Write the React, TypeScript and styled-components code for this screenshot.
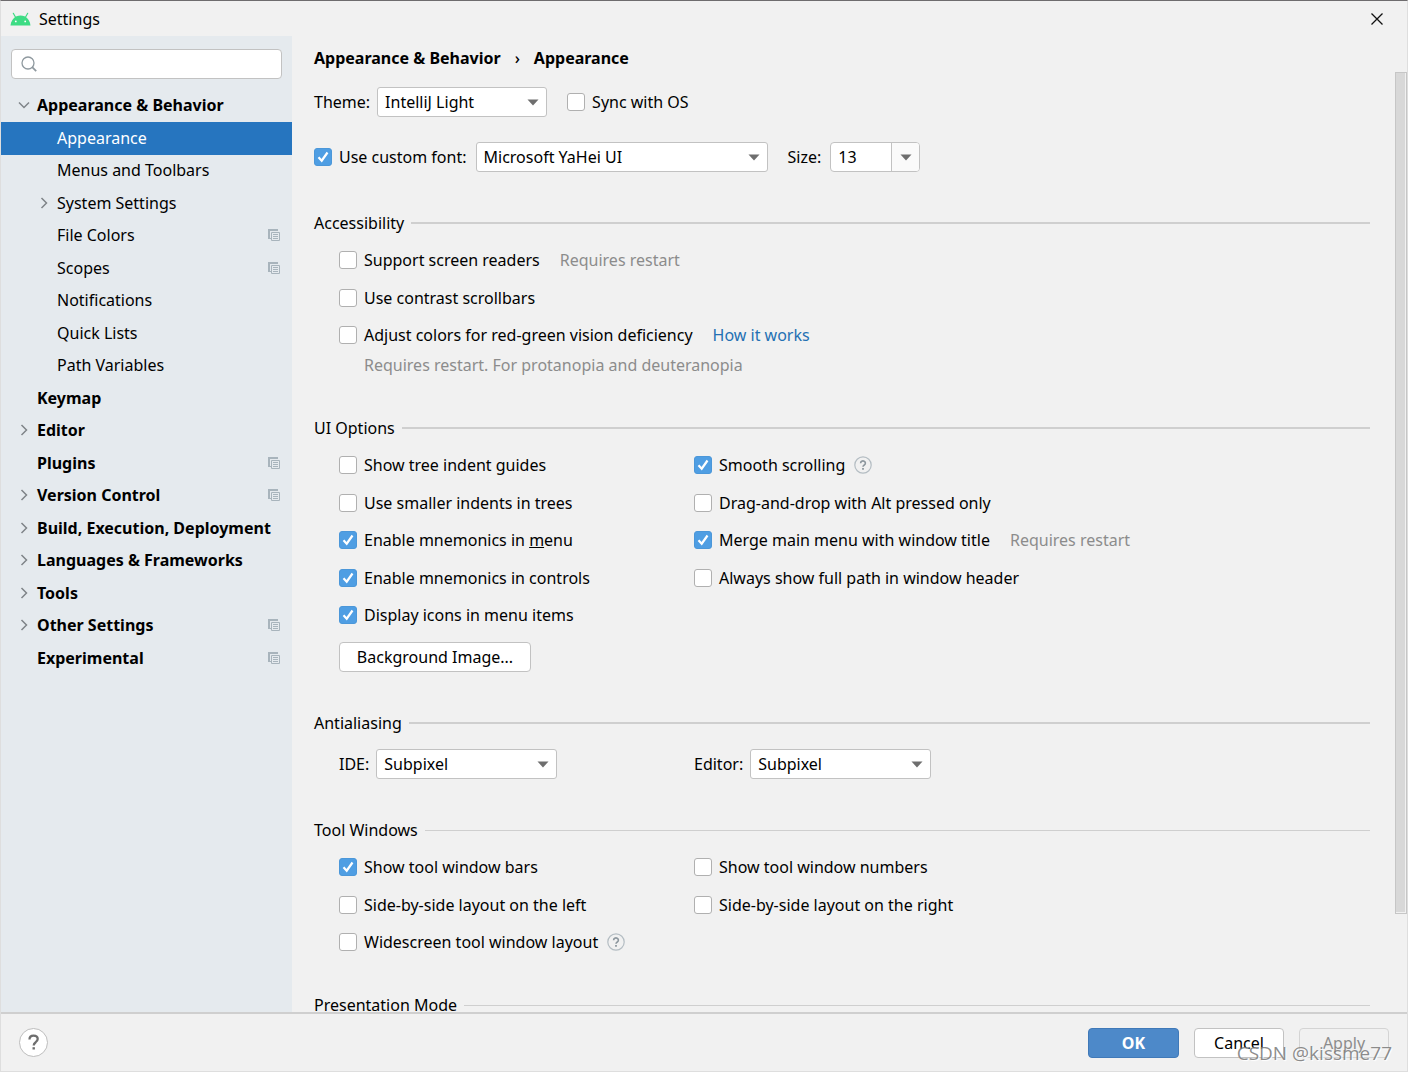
import React, { useId, useState } from "react";
import styled, { createGlobalStyle, css } from "styled-components";

const color = {
  window: "#f1f1f1",
  sidebar: "#e5eaee",
  selection: "#2675bf",
  line: "#cfcfcf",
  control: "#c2c2c2",
  muted: "#8c8c8c",
  link: "#2470b3",
  accent: "#4f9ee3",
};

const GlobalStyle = createGlobalStyle`
  *, *::before, *::after { box-sizing: border-box; }
  body {
    margin: 0;
    background: ${color.window};
    color: #000;
    font-family: "Noto Sans", "Open Sans", sans-serif;
    font-size: 16px;
    line-height: 24px;
  }
  button, input, select { font: inherit; color: inherit; }
`;

/* Window frame */

const Window = styled.div`
  display: flex;
  flex-direction: column;
  height: 100vh;
  overflow: hidden;
  border: 1px solid #dedede;
  border-top-color: #6e6c6e;
`;

const TitleBar = styled.header`
  display: flex;
  align-items: center;
  flex: none;
  gap: 8px;
  height: 35px;
  padding: 0 23px 0 9px;
`;

const WindowTitle = styled.h1`
  flex: 1;
  margin: 0;
  font-size: 16px;
  font-weight: 400;
`;

const CloseButton = styled.button`
  display: flex;
  padding: 0;
  border: 0;
  background: none;
`;

const Body = styled.div`
  display: flex;
  flex: 1;
  min-height: 0;
`;

/* Sidebar */

const Sidebar = styled.aside`
  flex: none;
  width: 291px;
  padding-top: 13px;
  background: ${color.sidebar};
`;

const SearchBox = styled.label`
  display: flex;
  align-items: center;
  height: 30px;
  margin: 0 10px 11px;
  padding: 0 9px;
  gap: 8px;
  border: 1px solid ${color.control};
  border-radius: 4px;
  background: #fff;
`;

const SearchInput = styled.input`
  flex: 1;
  min-width: 0;
  border: 0;
  outline: 0;
  background: none;
`;

const Tree = styled.ul`
  display: grid;
  grid-auto-rows: 32px 33px;
  margin: 0;
  padding: 0;
  list-style: none;
`;

const TreeItem = styled.li`
  display: grid;
`;

const TreeButton = styled.button<{ $level: number; $selected: boolean }>`
  display: flex;
  align-items: center;
  gap: 7px;
  padding: 0 12px 2px ${(p) => 17 + p.$level * 20}px;
  border: 0;
  background: none;
  text-align: left;
  font-weight: ${(p) => (p.$level === 0 ? 700 : 400)};
  white-space: nowrap;
  ${(p) =>
    p.$selected &&
    css`
      background: ${color.selection};
      color: #fff;
    `}
`;

const ChevronSlot = styled.span`
  display: flex;
  flex: none;
  width: 12px;
`;

const TreeLabel = styled.span`
  flex: 1;
`;

/* Main pane */

const Main = styled.main`
  display: flex;
  flex: 1;
  flex-direction: column;
  min-width: 0;
`;

const Breadcrumb = styled.nav`
  display: flex;
  flex: none;
  align-items: center;
  gap: 14px;
  height: 36px;
  padding: 8px 22px 0;
  font-weight: 700;
`;

const Separator = styled.span`
  font-weight: 500;
`;

const Viewport = styled.div`
  display: flex;
  flex: 1;
  min-height: 0;
`;

const Page = styled.div`
  display: flex;
  flex: 1;
  flex-direction: column;
  min-width: 0;
  padding: 15px 25px 0 22px;
  overflow: hidden;
`;

const ScrollTrack = styled.div`
  flex: none;
  width: 12px;
`;

const ScrollThumb = styled.div`
  height: 89.6%;
  border: 1px solid #c6c6c6;
  background: #d8d8d8;
  box-shadow: inset -1px -1px 0 ${color.window};
`;

const Row = styled.div<{ $after?: number }>`
  display: flex;
  align-items: center;
  flex: none;
  gap: 20px;
  margin-bottom: ${(p) => p.$after ?? 0}px;
`;

const Field = styled.div<{ $gap?: number }>`
  display: flex;
  align-items: center;
  gap: ${(p) => p.$gap ?? 7}px;
`;

const Section = styled.section`
  flex: none;
  margin-bottom: 32px;
`;

const SectionHeader = styled.div<{ $rule: number }>`
  display: flex;
  align-items: center;
  gap: 7px;
  height: 24px;
  margin-bottom: 6px;
  &::after {
    content: "";
    flex: 1;
    height: ${(p) => p.$rule}px;
    background: ${color.line};
  }
`;

const SectionTitle = styled.h2`
  margin: 0;
  font-size: 16px;
  font-weight: 400;
`;

const Options = styled.div`
  display: grid;
  grid-template-columns: 355px 1fr;
  grid-auto-rows: 38px 37px;
  align-items: center;
  padding-left: 25px;
`;

const Option = styled.div<{ $column?: number; $wide?: boolean }>`
  display: flex;
  align-items: center;
  grid-column: ${(p) => (p.$wide ? "1 / -1" : p.$column ?? "auto")};
  white-space: nowrap;
`;

const Note = styled.p`
  margin: 0 0 8px 50px;
  line-height: 22px;
  color: ${color.muted};
`;

const Hint = styled.span`
  margin-left: 20px;
  color: ${color.muted};
`;

const Link = styled.a`
  margin-left: 20px;
  color: ${color.link};
  text-decoration: none;
`;

const HelpSlot = styled.span`
  display: flex;
  margin-left: 9px;
`;

const ControlRow = styled.div`
  display: grid;
  grid-template-columns: 355px 1fr;
  align-items: center;
  padding: 8px 0 7px 25px;
`;

/* Controls */

const CheckLabel = styled.label`
  display: flex;
  align-items: center;
  gap: 7px;
`;

const CheckFrame = styled.span`
  display: grid;
  place-items: center;
  > * { grid-area: 1 / 1; }
`;

const CheckInput = styled.input`
  width: 18px;
  height: 18px;
  margin: 0;
  appearance: none;
  border: 1px solid #b0b0b0;
  border-radius: 3px;
  background: #fff;
  & + svg { visibility: hidden; pointer-events: none; }
  &:checked { border-color: #4b97d9; background: ${color.accent}; }
  &:checked + svg { visibility: visible; }
`;

const SelectFrame = styled.span<{ $width: number }>`
  display: grid;
  align-items: center;
  width: ${(p) => p.$width}px;
  > * { grid-area: 1 / 1; }
  > svg { justify-self: end; margin-right: 8px; pointer-events: none; }
`;

const SelectInput = styled.select`
  width: 100%;
  height: 30px;
  padding: 0 24px 0 7px;
  appearance: none;
  border: 1px solid ${color.control};
  border-radius: 3px;
  background: #fff;
`;

const ComboFrame = styled.span`
  display: flex;
  width: 90px;
  height: 30px;
  overflow: hidden;
  border: 1px solid ${color.control};
  border-radius: 4px;
  background: #fff;
`;

const ComboInput = styled.input`
  flex: 1;
  min-width: 0;
  padding: 0 7px;
  border: 0;
  outline: 0;
  background: none;
`;

const ComboButton = styled.button`
  display: flex;
  align-items: center;
  justify-content: center;
  width: 28px;
  padding: 0;
  border: 0;
  border-left: 1px solid ${color.control};
  background: #fafafa;
`;

const Button = styled.button<{ $primary?: boolean; $width: number }>`
  width: ${(p) => p.$width}px;
  height: 30px;
  padding: 0;
  border: 1px solid ${color.control};
  border-radius: 4px;
  background: #fff;
  ${(p) =>
    p.$primary &&
    css`
      border-color: #4079b8;
      background: #4d89c9;
      color: #fff;
      font-weight: 700;
    `}
  &:disabled {
    border-color: #d4d4d4;
    background: ${color.window};
    color: ${color.muted};
  }
`;

const Footer = styled.footer`
  display: flex;
  align-items: center;
  flex: none;
  gap: 15px;
  height: 59px;
  padding: 0 18px;
  border-top: 2px solid ${color.line};
`;

const HelpButton = styled.button`
  display: flex;
  align-items: center;
  justify-content: center;
  width: 29px;
  height: 29px;
  margin-right: auto;
  padding: 0;
  border: 1px solid #bdbdbd;
  border-radius: 50%;
  background: #fff;
`;

const Watermark = styled.span`
  position: absolute;
  right: 16px;
  bottom: 5px;
  font-family: "Open Sans", "Noto Sans", sans-serif;
  font-size: 19px;
  line-height: 28px;
  color: rgba(120, 120, 120, 0.85);
  text-shadow: 1px 1px 1px #fff;
  pointer-events: none;
`;

/* Icons */

const AndroidIcon = () => (
  <svg width="21" height="14" viewBox="0 0 21 14" aria-hidden="true">
    <path d="M0.5 13.5C.8 9.2 3.2 6 6.5 4.3a10 10 0 0 1 8 0c3.300 1.700 5.700 4.900 6 9.200z" fill="#3ddc84" />
    <path d="M5.700 5.500 3.300 1.300M15.300 5.500l2.400-4.200" stroke="#3ddc84" strokeWidth="1.200" strokeLinecap="round" />
    <circle cx="5.800" cy="9.400" r="0.900" fill="#fff" />
    <circle cx="15.200" cy="9.400" r="0.900" fill="#fff" />
  </svg>
);

const CloseIcon = () => (
  <svg width="14" height="14" viewBox="0 0 14 14" aria-hidden="true">
    <path d="M1.500 1.500l11 11M12.500 1.500l-11 11" stroke="#111" strokeWidth="1.300" />
  </svg>
);

const SearchIcon = () => (
  <svg width="16" height="16" viewBox="0 0 16 16" fill="none" stroke="#8f999f" aria-hidden="true">
    <circle cx="7" cy="7" r="6" strokeWidth="1.300" />
    <path d="M11.200 11.200l4 4" strokeWidth="1.800" />
  </svg>
);

const Chevron = ({ open }: { open?: boolean }) => (
  <svg width="12" height="12" viewBox="0 0 12 12" fill="none" stroke="#7f8488" strokeWidth="1.500" aria-hidden="true">
    <path d={open ? "M1 3.500l5 5 5-5" : "M3.500 1l5 5-5 5"} />
  </svg>
);

const ProjectIcon = () => (
  <svg width="12" height="12" viewBox="0 0 12 12" fill="none" aria-hidden="true">
    <path d="M0 0h10v2H2v7h1v1H0z" fill="#a8b4bc" />
    <path d="M3.500 3.500h8v8h-8z" stroke="#a8b4bc" />
    <path d="M5 5.500h5M5 7.500h5M5 9.500h5" stroke="#a8b4bc" />
  </svg>
);

const ArrowIcon = () => (
  <svg width="12" height="7" viewBox="0 0 12 7" aria-hidden="true">
    <path d="M0.500 0.500h11L6 6.500z" fill="#6e6e6e" />
  </svg>
);

const CheckIcon = () => (
  <svg width="18" height="18" viewBox="0 0 18 18" fill="none" aria-hidden="true">
    <path d="M4.500 9.300l3.200 3.400 5.800-8.200" stroke="#fff" strokeWidth="2.200" />
  </svg>
);

const HintIcon = () => (
  <svg width="18" height="18" viewBox="0 0 18 18" fill="none" aria-hidden="true">
    <circle cx="9" cy="9" r="8.200" stroke="#b4bdc3" strokeWidth="1.200" />
    <path d="M6.600 7.200a2.400 2.200 0 1 1 3.700 1.800c-.9.600-1.300.9-1.300 1.800" stroke="#8d979e" strokeWidth="1.600" />
    <path d="M8.100 12h1.800v1.700H8.100z" fill="#8d979e" />
  </svg>
);

const QuestionIcon = () => (
  <svg width="13" height="17" viewBox="0 0 13 17" fill="none" aria-hidden="true">
    <path d="M2.500 5.500c0-2.400 1.700-3.800 4-3.800s4.200 1.300 4.200 3.400c0 1.500-.8 2.200-2 3.100C7.300 9.200 6.700 9.800 6.700 11.500" stroke="#6e6e6e" strokeWidth="2.300" />
    <path d="M5.500 13.200h2.400v2.300H5.500z" fill="#6e6e6e" />
  </svg>
);

/* Composite parts */

type CheckProps = { children: React.ReactNode; on?: boolean };

const Check = ({ children, on }: CheckProps) => (
  <CheckLabel>
    <CheckFrame>
      <CheckInput type="checkbox" defaultChecked={on} />
      <CheckIcon />
    </CheckFrame>
    <span>{children}</span>
  </CheckLabel>
);

type SelectProps = { width: number; value: string; id?: string; label?: string };

const Select = ({ width, value, id, label }: SelectProps) => (
  <SelectFrame $width={width}>
    <SelectInput id={id} aria-label={label} defaultValue={value}>
      <option>{value}</option>
    </SelectInput>
    <ArrowIcon />
  </SelectFrame>
);

const LabeledSelect = ({ label, width, value }: { label: string; width: number; value: string }) => {
  const id = useId();
  return (
    <Field>
      <label htmlFor={id}>{label}</label>
      <Select id={id} width={width} value={value} />
    </Field>
  );
};

const Group = ({ title, rule = 2, children }: { title: string; rule?: number; children?: React.ReactNode }) => (
  <Section>
    <SectionHeader $rule={rule}>
      <SectionTitle>{title}</SectionTitle>
    </SectionHeader>
    {children}
  </Section>
);

type Node = { label: string; level: number; chevron?: "open" | "closed"; project?: boolean };

const nodes: Node[] = [
  { label: "Appearance & Behavior", level: 0, chevron: "open" },
  { label: "Appearance", level: 1 },
  { label: "Menus and Toolbars", level: 1 },
  { label: "System Settings", level: 1, chevron: "closed" },
  { label: "File Colors", level: 1, project: true },
  { label: "Scopes", level: 1, project: true },
  { label: "Notifications", level: 1 },
  { label: "Quick Lists", level: 1 },
  { label: "Path Variables", level: 1 },
  { label: "Keymap", level: 0 },
  { label: "Editor", level: 0, chevron: "closed" },
  { label: "Plugins", level: 0, project: true },
  { label: "Version Control", level: 0, chevron: "closed", project: true },
  { label: "Build, Execution, Deployment", level: 0, chevron: "closed" },
  { label: "Languages & Frameworks", level: 0, chevron: "closed" },
  { label: "Tools", level: 0, chevron: "closed" },
  { label: "Other Settings", level: 0, chevron: "closed", project: true },
  { label: "Experimental", level: 0, project: true },
];

export default function App() {
  const [selected, setSelected] = useState("Appearance");
  const sizeId = useId();

  return (
    <>
      <GlobalStyle />
      <Window>
        <TitleBar>
          <AndroidIcon />
          <WindowTitle>Settings</WindowTitle>
          <CloseButton aria-label="Close">
            <CloseIcon />
          </CloseButton>
        </TitleBar>

        <Body>
          <Sidebar>
            <SearchBox>
              <SearchIcon />
              <SearchInput type="text" aria-label="Search settings" />
            </SearchBox>
            <Tree>
              {nodes.map((node) => (
                <TreeItem key={node.label}>
                  <TreeButton
                    $level={node.level}
                    $selected={node.label === selected}
                    onClick={() => setSelected(node.label)}
                  >
                    <ChevronSlot>{node.chevron && <Chevron open={node.chevron === "open"} />}</ChevronSlot>
                    <TreeLabel>{node.label}</TreeLabel>
                    {node.project && <ProjectIcon />}
                  </TreeButton>
                </TreeItem>
              ))}
            </Tree>
          </Sidebar>

          <Main>
            <Breadcrumb aria-label="Breadcrumb">
              <span>Appearance &amp; Behavior</span>
              <Separator>›</Separator>
              <span>Appearance</span>
            </Breadcrumb>

            <Viewport>
              <Page>
                <Row $after={25}>
                  <LabeledSelect label="Theme:" width={170} value="IntelliJ Light" />
                  <Check>Sync with OS</Check>
                </Row>
                <Row $after={39}>
                  <Field $gap={9}>
                    <Check on>Use custom font:</Check>
                    <Select width={292} value="Microsoft YaHei UI" label="Custom font" />
                  </Field>
                  <Field $gap={9}>
                    <label htmlFor={sizeId}>Size:</label>
                    <ComboFrame>
                      <ComboInput id={sizeId} type="text" defaultValue="13" />
                      <ComboButton aria-label="Choose size">
                        <ArrowIcon />
                      </ComboButton>
                    </ComboFrame>
                  </Field>
                </Row>

                <Group title="Accessibility">
                  <Options>
                    <Option $wide>
                      <Check>Support screen readers</Check>
                      <Hint>Requires restart</Hint>
                    </Option>
                    <Option $wide>
                      <Check>Use contrast scrollbars</Check>
                    </Option>
                    <Option $wide>
                      <Check>Adjust colors for red-green vision deficiency</Check>
                      <Link href="#how-it-works">How it works</Link>
                    </Option>
                  </Options>
                  <Note>Requires restart. For protanopia and deuteranopia</Note>
                </Group>

                <Group title="UI Options">
                  <Options>
                    <Option>
                      <Check>Show tree indent guides</Check>
                    </Option>
                    <Option>
                      <Check on>Smooth scrolling</Check>
                      <HelpSlot>
                        <HintIcon />
                      </HelpSlot>
                    </Option>
                    <Option>
                      <Check>Use smaller indents in trees</Check>
                    </Option>
                    <Option>
                      <Check>Drag-and-drop with Alt pressed only</Check>
                    </Option>
                    <Option>
                      <Check on>
                        Enable mnemonics in <u>m</u>enu
                      </Check>
                    </Option>
                    <Option>
                      <Check on>Merge main menu with window title</Check>
                      <Hint>Requires restart</Hint>
                    </Option>
                    <Option>
                      <Check on>Enable mnemonics in controls</Check>
                    </Option>
                    <Option>
                      <Check>Always show full path in window header</Check>
                    </Option>
                    <Option $column={1}>
                      <Check on>Display icons in menu items</Check>
                    </Option>
                  </Options>
                  <ControlRow>
                    <Button $width={192}>Background Image...</Button>
                  </ControlRow>
                </Group>

                <Group title="Antialiasing">
                  <ControlRow>
                    <LabeledSelect label="IDE:" width={181} value="Subpixel" />
                    <LabeledSelect label="Editor:" width={181} value="Subpixel" />
                  </ControlRow>
                </Group>

                <Group title="Tool Windows" rule={1}>
                  <Options>
                    <Option>
                      <Check on>Show tool window bars</Check>
                    </Option>
                    <Option>
                      <Check>Show tool window numbers</Check>
                    </Option>
                    <Option>
                      <Check>Side-by-side layout on the left</Check>
                    </Option>
                    <Option>
                      <Check>Side-by-side layout on the right</Check>
                    </Option>
                    <Option>
                      <Check>Widescreen tool window layout</Check>
                      <HelpSlot>
                        <HintIcon />
                      </HelpSlot>
                    </Option>
                  </Options>
                </Group>

                <Group title="Presentation Mode" rule={1} />
              </Page>
              <ScrollTrack>
                <ScrollThumb />
              </ScrollTrack>
            </Viewport>
          </Main>
        </Body>

        <Footer>
          <HelpButton aria-label="Help">
            <QuestionIcon />
          </HelpButton>
          <Button $primary $width={91}>OK</Button>
          <Button $width={90}>Cancel</Button>
          <Button $width={90} disabled>Apply</Button>
        </Footer>
        <Watermark>CSDN @kissme77</Watermark>
      </Window>
    </>
  );
}
